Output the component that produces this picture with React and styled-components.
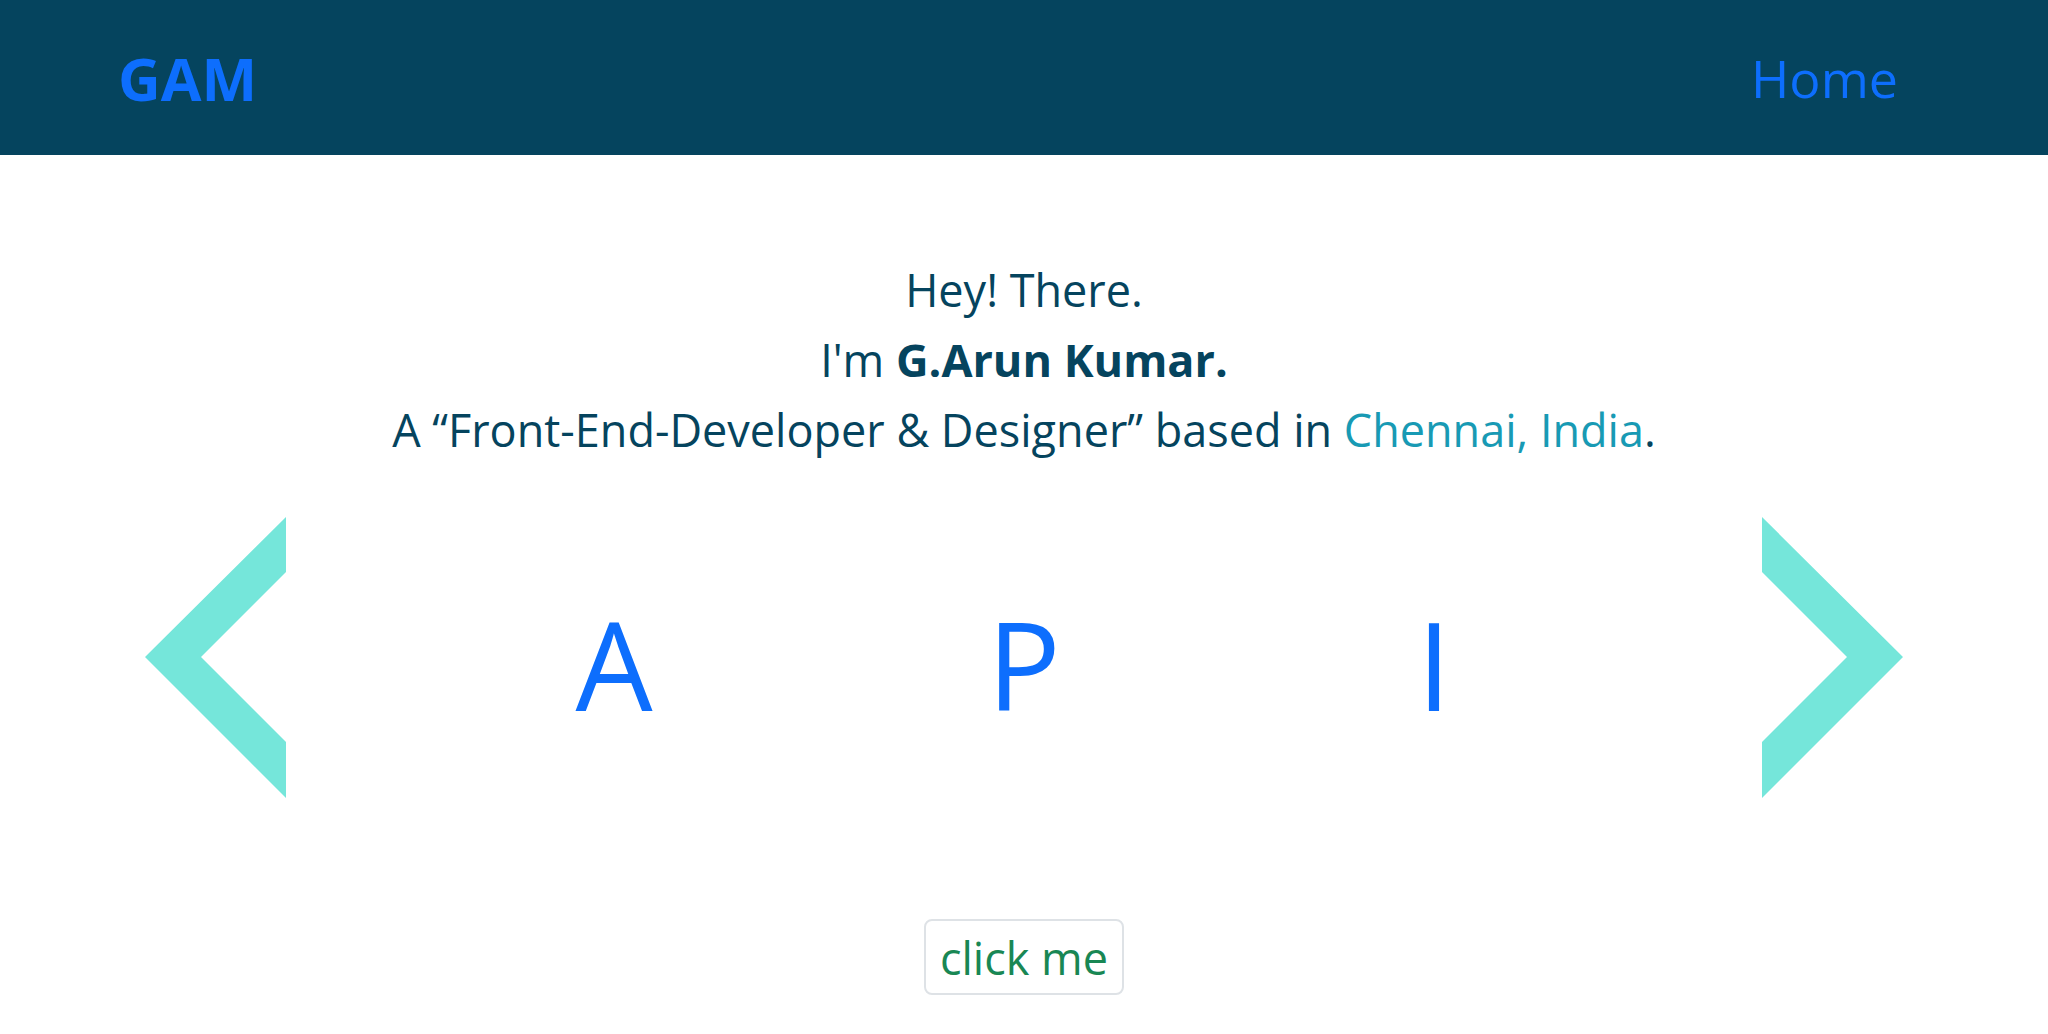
import styled, { createGlobalStyle } from "styled-components";

const GlobalStyle = createGlobalStyle`
  body {
    margin: 0;
    font-family: "Open Sans", "Noto Sans", sans-serif;
    background: #ffffff;
  }
`;

function Chevron({ dir }) {
  const points =
    dir === "left"
      ? "141,0 0,140 141,281 141,225 56,140 141,55"
      : "0,0 141,140 0,281 0,225 85,140 0,55";
  return (
    <svg width="141" height="281" viewBox="0 0 141 281">
      <polygon points={points} fill="#75e6da" />
    </svg>
  );
}

export default function App() {
  return (
    <>
      <GlobalStyle />
      <NavBar>
        <Brand>GAM</Brand>
        <NavLink>Home</NavLink>
      </NavBar>
      <Main>
        <Intro>
          <Line>Hey! There.</Line>
          <Line>
            I'm <strong>G.Arun Kumar.</strong>
          </Line>
          <Line>
            A “Front-End-Developer &amp; Designer” based in{" "}
            <Place>Chennai, India</Place>.
          </Line>
        </Intro>
        <Carousel>
          <ArrowButton aria-label="previous">
            <Chevron dir="left" />
          </ArrowButton>
          <Letters>
            <Letter>A</Letter>
            <Letter>P</Letter>
            <Letter>I</Letter>
          </Letters>
          <ArrowButton aria-label="next">
            <Chevron dir="right" />
          </ArrowButton>
        </Carousel>
        <ClickButton>click me</ClickButton>
      </Main>
    </>
  );
}

const NavBar = styled.nav`
  height: 155px;
  background: #05445e;
  display: flex;
  align-items: center;
  justify-content: space-between;
  padding: 0 150px 0 118px;
  box-sizing: border-box;
`;

const Brand = styled.a`
  color: #0d6efd;
  font-weight: 700;
  font-size: 59px;
`;

const NavLink = styled.a`
  color: #0d6efd;
  font-size: 52px;
`;

const Main = styled.main`
  display: flex;
  flex-direction: column;
  align-items: center;
`;

const Intro = styled.div`
  margin-top: 100px;
  text-align: center;
  color: #05445e;
  font-size: 45px;
  line-height: 70px;
`;

const Line = styled.p`
  margin: 0;

  strong {
    font-weight: 700;
  }
`;

const Place = styled.span`
  color: #189ab4;
`;

const Carousel = styled.div`
  margin-top: 52px;
  width: 1758px;
  display: grid;
  grid-template-columns: 141px 1fr 141px;
  align-items: center;
`;

const ArrowButton = styled.div`
  display: flex;
  height: 281px;
`;

const Letters = styled.div`
  display: grid;
  grid-template-columns: repeat(3, 410px);
  justify-content: center;
  padding-top: 12px;
`;

const Letter = styled.span`
  text-align: center;
  color: #0d6efd;
  font-size: 122px;
  line-height: 1;
`;

const ClickButton = styled.button`
  margin-top: 121px;
  height: 76px;
  padding: 0 14px;
  background: #ffffff;
  border: 2px solid #dee2e6;
  border-radius: 8px;
  color: #198754;
  font-family: "Open Sans", "Noto Sans", sans-serif;
  font-size: 45px;
  line-height: 1;
`;
